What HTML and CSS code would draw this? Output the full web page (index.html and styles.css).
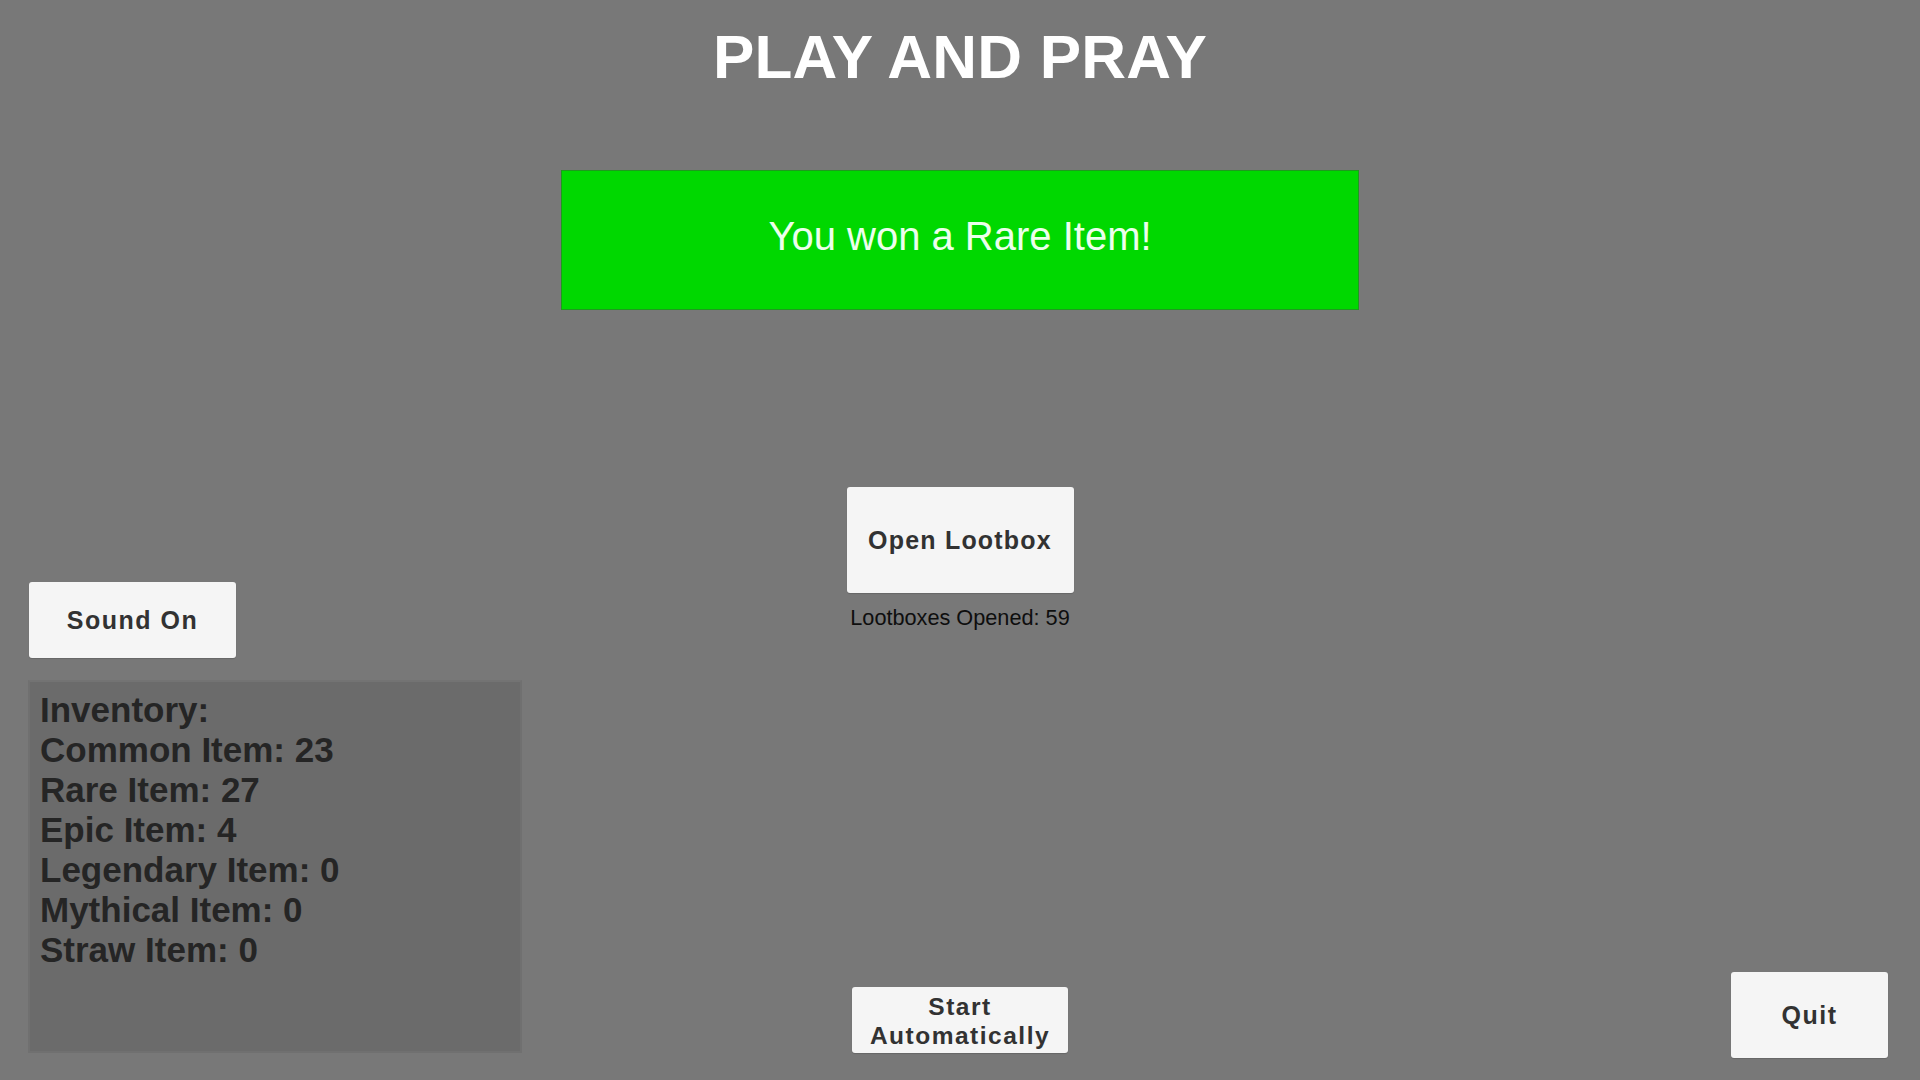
FILE: index.html
```html
<!DOCTYPE html>
<html lang="en">
<head>
<meta charset="utf-8">
<title>Play and Pray</title>
<link rel="stylesheet" href="styles.css">
</head>
<body>
<div class="page">
  <h1 class="title">PLAY AND PRAY</h1>
  <div class="banner">You won a Rare Item!</div>
  <div class="stage">
    <div class="col col-left">
      <button class="btn btn-sound">Sound On</button>
      <div class="inventory">
        <div class="inv-line">Inventory:</div>
        <div class="inv-line">Common Item: 23</div>
        <div class="inv-line">Rare Item: 27</div>
        <div class="inv-line">Epic Item: 4</div>
        <div class="inv-line">Legendary Item: 0</div>
        <div class="inv-line">Mythical Item: 0</div>
        <div class="inv-line">Straw Item: 0</div>
      </div>
    </div>
    <div class="col col-center">
      <button class="btn btn-open">Open Lootbox</button>
      <div class="opened">Lootboxes Opened: 59</div>
      <button class="btn btn-auto">Start<br>Automatically</button>
    </div>
    <div class="col col-right">
      <button class="btn btn-quit">Quit</button>
    </div>
  </div>
</div>
</body>
</html>
```
FILE: styles.css
```css
html, body {
  margin: 0;
  padding: 0;
}
body {
  background: #787878;
  font-family: "Liberation Sans", Arial, sans-serif;
  width: 1920px;
  height: 1080px;
  overflow: hidden;
}
.page {
  display: flex;
  flex-direction: column;
  align-items: center;
  height: 1080px;
}
.title {
  margin: 26px 0 0;
  font-size: 62px;
  line-height: 61px;
  font-weight: bold;
  color: #ffffff;
  letter-spacing: 0.2px;
}
.banner {
  margin-top: 83px;
  width: 796px;
  height: 131px;
  box-sizing: content-box;
  background: #00d800;
  border: 1px solid #1e9a1e;
  display: flex;
  align-items: center;
  justify-content: center;
  color: #ecffec;
  font-size: 40px;
  padding-bottom: 7px;
}
.stage {
  margin-top: 177px;
  flex: 1;
  align-self: stretch;
  display: grid;
  grid-template-columns: 1fr auto 1fr;
}
.col {
  display: flex;
  flex-direction: column;
}
.col-left {
  padding: 95px 0 27px 28px;
  align-items: flex-start;
}
.col-center {
  align-items: center;
  padding-bottom: 27px;
}
.col-right {
  align-items: flex-end;
  justify-content: flex-end;
  padding: 0 32px 22px 0;
}
.btn {
  background: #f5f5f5;
  border: none;
  border-radius: 3px;
  color: #323232;
  font-family: "Liberation Sans", Arial, sans-serif;
  font-weight: bold;
  padding: 0;
  margin: 0;
  box-shadow: 0 1px 1px rgba(0,0,0,0.15);
}
.btn-sound {
  margin-left: 1px;
  width: 207px;
  height: 76px;
  font-size: 25px;
  letter-spacing: 1.5px;
}
.inventory {
  margin-top: 22px;
  width: 494px;
  height: 373px;
  box-sizing: border-box;
  background: #6b6b6b;
  border: 2px solid #707070;
  border-top-color: #737373;
  padding: 8px 0 0 10px;
  color: #252525;
  font-weight: bold;
  font-size: 35px;
  line-height: 40px;
}
.btn-open {
  width: 227px;
  height: 106px;
  font-size: 25px;
  letter-spacing: 1.2px;
}
.opened {
  margin-top: 13px;
  font-size: 21.7px;
  line-height: 24px;
  color: #0e0e0e;
}
.btn-auto {
  margin-top: auto;
  width: 216px;
  height: 66px;
  font-size: 24.5px;
  line-height: 29px;
  letter-spacing: 1.5px;
  padding-top: 1px;
}
.btn-quit {
  width: 157px;
  height: 86px;
  font-size: 25px;
  letter-spacing: 1.5px;
}
```
